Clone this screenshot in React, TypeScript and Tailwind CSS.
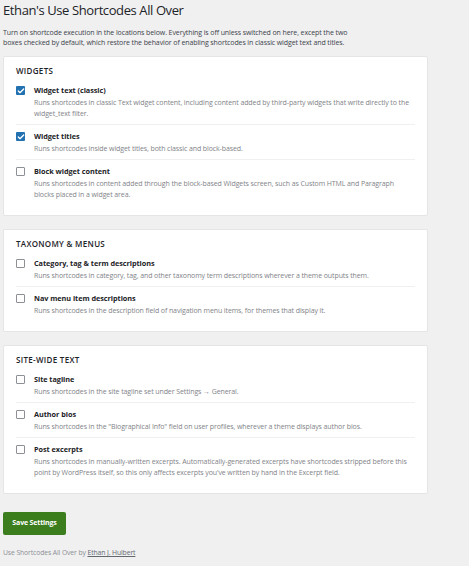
import { Check } from "lucide-react";

type Option = {
  label: string;
  desc: string;
  checked?: boolean;
};

type Section = {
  title: string;
  options: Option[];
};

const sections: Section[] = [
  {
    title: "WIDGETS",
    options: [
      {
        label: "Widget text (classic)",
        desc: "Runs shortcodes in classic Text widget content, including content added by third-party widgets that write directly to the widget_text filter.",
        checked: true,
      },
      {
        label: "Widget titles",
        desc: "Runs shortcodes inside widget titles, both classic and block-based.",
        checked: true,
      },
      {
        label: "Block widget content",
        desc: "Runs shortcodes in content added through the block-based Widgets screen, such as Custom HTML and Paragraph blocks placed in a widget area.",
      },
    ],
  },
  {
    title: "TAXONOMY & MENUS",
    options: [
      {
        label: "Category, tag & term descriptions",
        desc: "Runs shortcodes in category, tag, and other taxonomy term descriptions wherever a theme outputs them.",
      },
      {
        label: "Nav menu item descriptions",
        desc: "Runs shortcodes in the description field of navigation menu items, for themes that display it.",
      },
    ],
  },
  {
    title: "SITE-WIDE TEXT",
    options: [
      {
        label: "Site tagline",
        desc: "Runs shortcodes in the site tagline set under Settings \u2192 General.",
      },
      {
        label: "Author bios",
        desc: "Runs shortcodes in the \"Biographical Info\" field on user profiles, wherever a theme displays author bios.",
      },
      {
        label: "Post excerpts",
        desc: "Runs shortcodes in manually-written excerpts. Automatically-generated excerpts have shortcodes stripped before this point by WordPress itself, so this only affects excerpts you've written by hand in the Excerpt field.",
      },
    ],
  },
];

function Checkbox({ checked }: { checked?: boolean }) {
  if (checked) {
    return (
      <span className="mt-[2px] flex size-[9px] shrink-0 items-center justify-center rounded-[1px] bg-[#2271b1]">
        <Check className="size-[8px] text-white" strokeWidth={4} />
      </span>
    );
  }
  return (
    <span className="mt-[2px] size-[9px] shrink-0 rounded-[1px] border border-[#8c8f94] bg-white" />
  );
}

function OptionRow({ option, first }: { option: Option; first: boolean }) {
  return (
    <div
      className={`flex gap-[9px] pt-[5px] pb-[5px] ${first ? "" : "border-t border-[#f0f0f1]"}`}
    >
      <Checkbox checked={option.checked} />
      <div className="flex-1">
        <div className="text-[7.3px] leading-[12px] font-bold text-[#1d2327] tracking-[-0.05px]">
          {option.label}
        </div>
        <p className="mt-[1px] text-[7px] leading-[11px] text-[#7f8389] tracking-[-0.1px]">
          {option.desc}
        </p>
      </div>
    </div>
  );
}

export default function App() {
  return (
    <div className="min-h-[566px] bg-[#f0f0f1] px-[3px] pt-[1px] font-['Open_Sans',sans-serif]">
      <h1 className="text-[13px] leading-[18px] text-[#1d2327] tracking-[-0.4px]">
        Ethan's Use Shortcodes All Over
      </h1>

      <p className="mt-[9px] w-[356px] text-[7px] leading-[10px] text-[#3c434a] tracking-[-0.1px]">
        Turn on shortcode execution in the locations below. Everything is off unless switched on here,
        except the two boxes checked by default, which restore the behavior of enabling shortcodes in
        classic widget text and titles.
      </p>

      <div className="mt-[8px] flex w-[425px] flex-col gap-[13px]">
        {sections.map((section) => (
          <div
            key={section.title}
            className="rounded-[2px] border border-[#e4e5e7] bg-white px-[12px] pt-[9px] pb-[10px]"
          >
            <h2 className="mb-[3px] text-[8px] leading-[10px] font-semibold text-[#1d2327] tracking-[0.3px]">
              {section.title}
            </h2>
            {section.options.map((option, i) => (
              <OptionRow key={option.label} option={option} first={i === 0} />
            ))}
          </div>
        ))}
      </div>

      <button className="mt-[18px] h-[23px] w-[63px] rounded-[2px] bg-[#3c7d1e] text-[7px] font-bold text-white tracking-[-0.15px]">
        Save Settings
      </button>

      <p className="mt-[13px] text-[6.8px] leading-[10px] text-[#8c8f94] tracking-[-0.1px]">
        Use Shortcodes All Over by{" "}
        <a className="text-[#646970] underline" href="#">
          Ethan J. Hulbert
        </a>
      </p>
    </div>
  );
}
